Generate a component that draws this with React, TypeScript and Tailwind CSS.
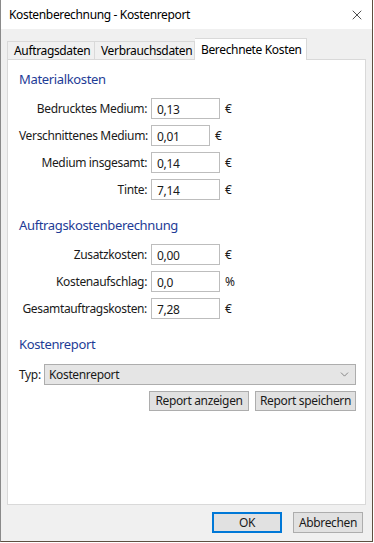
import { X, ChevronDown } from "lucide-react";

const font = { fontFamily: '"Noto Sans", "Liberation Sans", sans-serif' };

type Row = { label: string; value: string; unit: string; narrow?: boolean };

const material: Row[] = [
  { label: "Bedrucktes Medium:", value: "0,13", unit: "€" },
  { label: "Verschnittenes Medium:", value: "0,01", unit: "€", narrow: true },
  { label: "Medium insgesamt:", value: "0,14", unit: "€" },
  { label: "Tinte:", value: "7,14", unit: "€" },
];

const auftrag: Row[] = [
  { label: "Zusatzkosten:", value: "0,00", unit: "€" },
  { label: "Kostenaufschlag:", value: "0,0", unit: "%" },
  { label: "Gesamtauftragskosten:", value: "7,28", unit: "€" },
];

const Field = ({ row }: { row: Row }) => (
  <div className="flex items-center h-[21px]">
    <div className="w-[128px] text-right whitespace-nowrap text-[12px] text-[#1a1a1a] leading-none">
      {row.label}
    </div>
    <div
      className={
        (row.narrow ? "w-[59px]" : "w-[69px]") +
        " ml-[4px] h-[21px] border border-[#bdbdbd] bg-white flex items-center pl-[5px] pt-[2px] text-[12px] text-[#1a1a1a]"
      }
    >
      {row.value}
    </div>
    <div className="ml-[5px] text-[12px] text-[#1a1a1a]">{row.unit}</div>
  </div>
);

const Header = ({ children }: { children: string }) => (
  <div className="h-[20px] flex items-center text-[13px] text-[#1e3c96] whitespace-nowrap">
    {children}
  </div>
);

export default function App() {
  return (
    <div className="w-[374px] h-[543px] bg-white tracking-[-0.35px]" style={font}>
      <div className="w-[373px] h-[542px] flex flex-col bg-[#f0f0f0] border-l border-r border-b border-l-[#8a8a8a] border-r-[#5e4f40] border-b-[#5e4f40]">
        {/* title bar */}
        <div className="h-[29px] bg-white flex items-center justify-between pl-[8px] pr-[7px]">
          <span className="text-[12px] text-black whitespace-nowrap">Kostenberechnung - Kostenreport</span>
          <X className="w-[16px] h-[16px] text-[#222]" strokeWidth={1.2} />
        </div>

        {/* tabs */}
        <div className="mt-[9px] px-[6px] flex items-end h-[21px] relative z-10">
          <div className="h-[18px] pl-[6px] border border-b-0 border-[#d9d9d9] bg-[#f0f0f0] flex items-center text-[12px] text-black w-[88px] whitespace-nowrap">
            Auftragsdaten
          </div>
          <div className="h-[18px] pl-[6px] border border-l-0 border-b-0 border-[#d9d9d9] bg-[#f0f0f0] flex items-center text-[12px] text-black w-[100px] whitespace-nowrap">
            Verbrauchsdaten
          </div>
          <div className="h-[22px] -mb-[1px] pl-[6px] border border-l-0 border-b-0 border-[#d9d9d9] bg-white flex items-center text-[12px] text-black w-[112px] whitespace-nowrap">
            Berechnete Kosten
          </div>
        </div>

        {/* panel */}
        <div className="mx-[6px] h-[446px] bg-white border border-[#d9d9d9] pl-[11px] pt-[10px] flex flex-col">
          <Header>Materialkosten</Header>
          <div className="mt-[8px] flex flex-col gap-[6px]">
            {material.map((r) => (
              <Field key={r.label} row={r} />
            ))}
          </div>

          <div className="mt-[16px]">
            <Header>Auftragskostenberechnung</Header>
          </div>
          <div className="mt-[8px] flex flex-col gap-[6px]">
            {auftrag.map((r) => (
              <Field key={r.label} row={r} />
            ))}
          </div>

          <div className="mt-[16px]">
            <Header>Kostenreport</Header>
          </div>
          <div className="mt-[9px] flex items-center pr-[9px]">
            <span className="text-[12px] text-[#1a1a1a] w-[25px]">Typ:</span>
            <div className="flex-1 h-[21px] border border-[#adadad] bg-[#e5e5e5] flex items-center justify-between pl-[4px] pr-[4px] text-[12px] text-[#1a1a1a]">
              <span>Kostenreport</span>
              <ChevronDown className="w-[13px] h-[13px] text-[#606060]" strokeWidth={1.3} />
            </div>
          </div>
          <div className="mt-[6px] flex justify-end gap-[6px] pr-[9px]">
            <button className="w-[100px] h-[20px] border border-[#adadad] bg-[#e1e1e1] text-[12px] text-[#1a1a1a] leading-none whitespace-nowrap">
              Report anzeigen
            </button>
            <button className="w-[101px] h-[20px] border border-[#adadad] bg-[#e1e1e1] text-[12px] text-[#1a1a1a] leading-none whitespace-nowrap">
              Report speichern
            </button>
          </div>
        </div>

        {/* footer */}
        <div className="mt-[7px] flex justify-end gap-[11px] pr-[9px]">
          <button className="w-[70px] h-[21px] border-2 border-[#0078d7] bg-[#e1e1e1] text-[12px] text-[#1a1a1a] leading-none">
            OK
          </button>
          <button className="w-[70px] h-[21px] border border-[#adadad] bg-[#e1e1e1] text-[12px] text-[#1a1a1a] leading-none">
            Abbrechen
          </button>
        </div>
      </div>
    </div>
  );
}
